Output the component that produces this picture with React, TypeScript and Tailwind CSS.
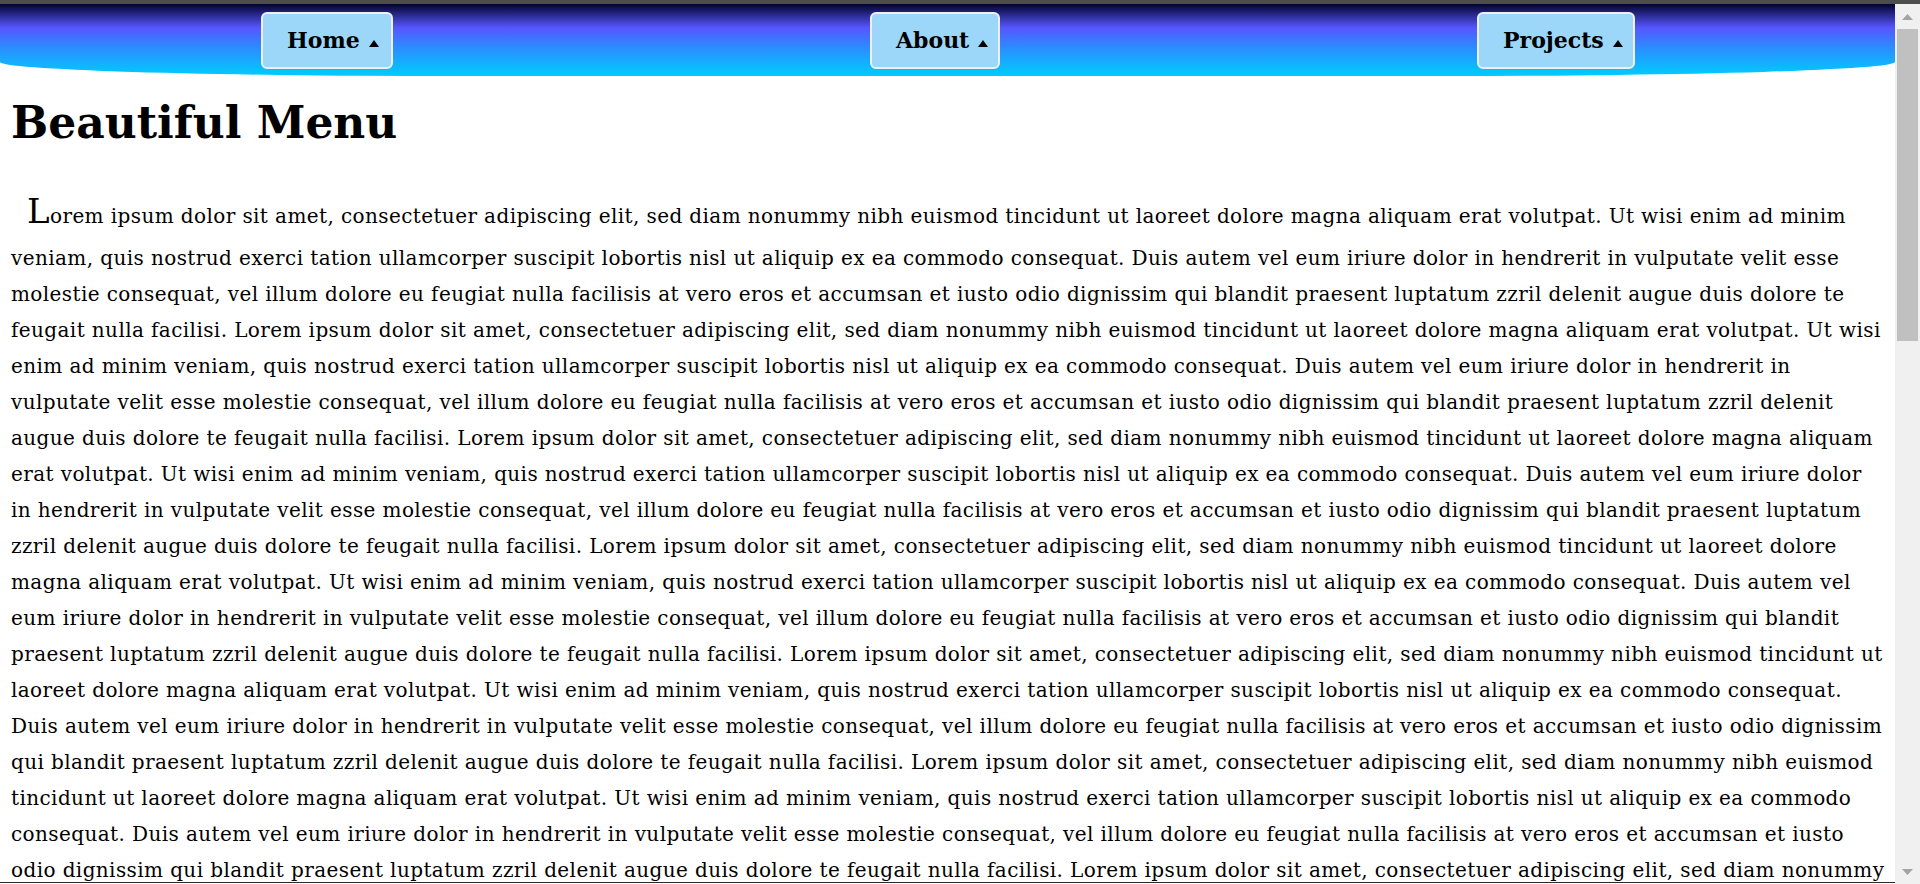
const LOREM =
  "Lorem ipsum dolor sit amet, consectetuer adipiscing elit, sed diam nonummy nibh euismod tincidunt ut laoreet dolore magna aliquam erat volutpat. Ut wisi enim ad minim veniam, quis nostrud exerci tation ullamcorper suscipit lobortis nisl ut aliquip ex ea commodo consequat. Duis autem vel eum iriure dolor in hendrerit in vulputate velit esse molestie consequat, vel illum dolore eu feugiat nulla facilisis at vero eros et accumsan et iusto odio dignissim qui blandit praesent luptatum zzril delenit augue duis dolore te feugait nulla facilisi.";

const menu = [
  { label: "Home", width: "w-[132px]" },
  { label: "About", width: "w-[130px]" },
  { label: "Projects", width: "w-[158px]" },
];

// small up-pointing triangle next to each menu label
const Caret = () => (
  <svg width="10" height="7" viewBox="0 0 10 7" className="ml-[9px] mt-[6px] shrink-0">
    <path d="M5 0 L10 7 L0 7 Z" fill="#000" />
  </svg>
);

const ScrollArrow = ({ down = false }: { down?: boolean }) => (
  <div className="flex h-[25px] items-center justify-center">
    <svg width="11" height="6" viewBox="0 0 11 6">
      <path d={down ? "M0 0 L11 0 L5.5 6 Z" : "M5.5 0 L11 6 L0 6 Z"} fill="#a3a3a3" />
    </svg>
  </div>
);

export default function App() {
  const text = Array.from({ length: 8 }, () => LOREM).join(" ");

  return (
    <div className="flex h-[884px] flex-col overflow-hidden bg-white font-['DejaVu_Serif',Georgia,serif] text-black">
      {/* thin dark strip above the viewport */}
      <div className="h-[4px] shrink-0 bg-[#4d4d4d]" />

      <div className="flex min-h-0 flex-1">
        {/* page content */}
        <div className="flex min-w-0 flex-1 flex-col">
          <div className="min-h-0 flex-1 overflow-hidden">
            {/* Gradient menu bar with curved bottom */}
            <nav className="flex h-[72px] gap-[477px] rounded-bl-[450px_14px] rounded-br-[450px_14px] bg-[linear-gradient(to_bottom,#02022e_0%,#5656ff_33%,#2a8fff_62%,#00ccff_100%)] pl-[261px] pt-[8px]">
              {menu.map((item) => (
                <a
                  key={item.label}
                  href="#"
                  className={`${item.width} flex h-[57px] items-center rounded-[6px] border-2 border-[#efefef] bg-[#9cd7f9] pl-[24px] text-[22px] font-bold`}
                >
                  {item.label}
                  <Caret />
                </a>
              ))}
            </nav>

            <h1 className="mt-[25px] pl-[11px] text-[44px] leading-[44px] font-bold">
              Beautiful Menu
            </h1>

            <p className="mt-[37px] pl-[11px] pr-[8px] indent-[16px] text-[20px] leading-[36px] tracking-[0.4px] first-letter:text-[34px] first-letter:leading-[58px]">
              {text}
            </p>
          </div>
          <div className="h-px shrink-0 bg-[#2a2a2a]" />
          <div className="h-px shrink-0" />
        </div>

        {/* scrollbar */}
        <div className="flex w-[25px] shrink-0 flex-col bg-[#f0f0f0]">
          <ScrollArrow />
          <div className="mx-[2px] h-[312px] bg-[#c0c0c0]" />
          <div className="flex-1" />
          <ScrollArrow down />
        </div>
      </div>
    </div>
  );
}
